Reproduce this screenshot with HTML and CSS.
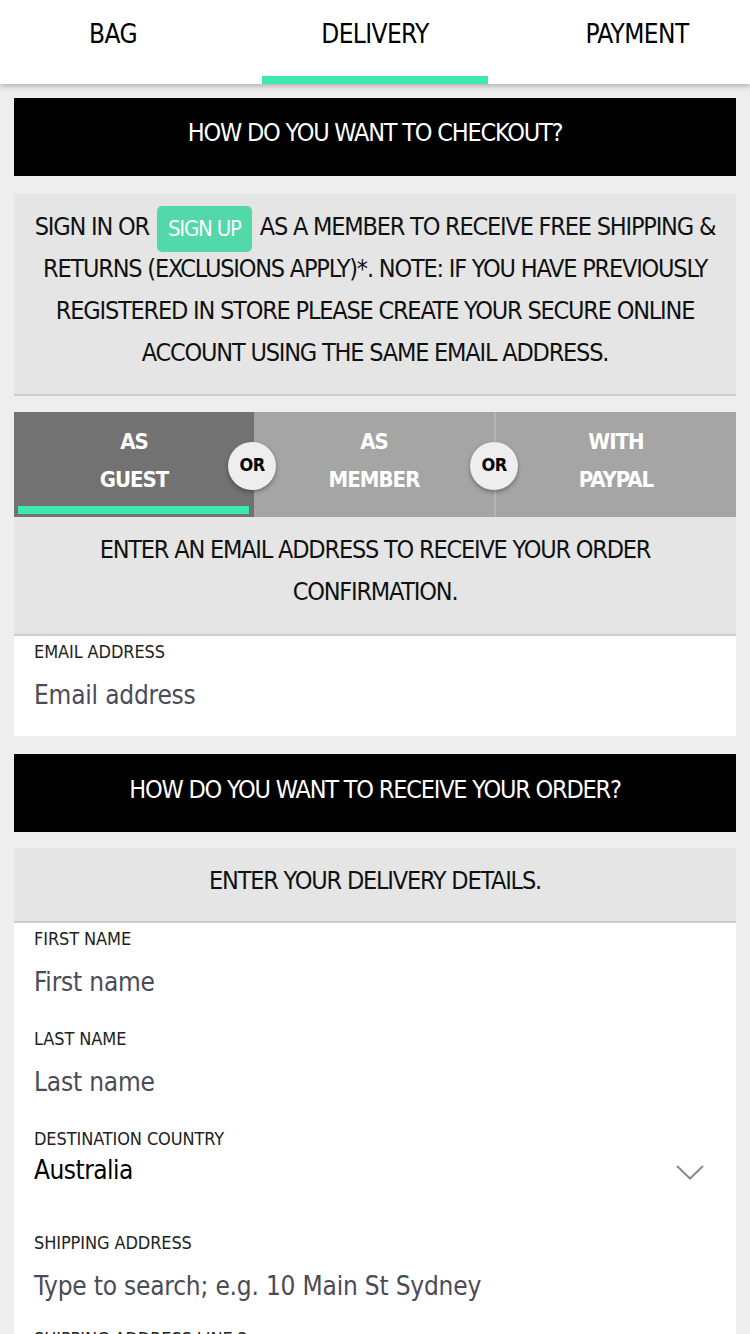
FILE: index.html
```html
<!DOCTYPE html>
<html lang="en">
<head>
<meta charset="utf-8">
<title>Checkout - Delivery</title>
<link rel="stylesheet" href="styles.css">
</head>
<body>
<header class="steps">
  <div class="step step-first"><span class="step-label">BAG</span></div>
  <div class="step step-active"><span class="step-label">DELIVERY</span><span class="step-bar"></span></div>
  <div class="step step-last"><span class="step-label">PAYMENT</span></div>
</header>
<main class="page">
  <h2 class="banner">HOW DO YOU WANT TO CHECKOUT?</h2>
  <div class="note note-first">
    SIGN IN OR <span class="signup">SIGN UP</span> AS A MEMBER TO RECEIVE FREE SHIPPING &amp;<br>RETURNS (EXCLUSIONS APPLY)*. NOTE: IF YOU HAVE PREVIOUSLY<br>REGISTERED IN STORE PLEASE CREATE YOUR SECURE ONLINE<br>ACCOUNT USING THE SAME EMAIL ADDRESS.
  </div>
  <div class="methods">
    <div class="method method-active"><span class="method-text">AS<br>GUEST</span><span class="method-bar"></span></div>
    <div class="method"><span class="method-text">AS<br>MEMBER</span></div>
    <div class="method method-last"><span class="method-text">WITH<br>PAYPAL</span></div>
    <span class="or or-1">OR</span>
    <span class="or or-2">OR</span>
  </div>
  <div class="note">ENTER AN EMAIL ADDRESS TO RECEIVE YOUR ORDER<br>CONFIRMATION.</div>
  <div class="card">
    <div class="field">
      <div class="field-label">EMAIL ADDRESS</div>
      <div class="field-input">Email address</div>
    </div>
  </div>
  <h2 class="banner banner-second">HOW DO YOU WANT TO RECEIVE YOUR ORDER?</h2>
  <div class="note note-short">ENTER YOUR DELIVERY DETAILS.</div>
  <div class="card card-open">
    <div class="field">
      <div class="field-label">FIRST NAME</div>
      <div class="field-input">First name</div>
    </div>
    <div class="field">
      <div class="field-label">LAST NAME</div>
      <div class="field-input">Last name</div>
    </div>
    <div class="field field-select">
      <div class="field-label">DESTINATION COUNTRY</div>
      <div class="select-row">
        <div class="field-value">Australia</div>
        <svg class="chevron" width="28" height="15" viewBox="0 0 28 15"><path d="M1 1 L14 13.5 L27 1" fill="none" stroke="#8a8a8a" stroke-width="2"/></svg>
      </div>
    </div>
    <div class="field">
      <div class="field-label">SHIPPING ADDRESS</div>
      <div class="field-input">Type to search; e.g. 10 Main St Sydney</div>
    </div>
    <div class="field field-partial">
      <div class="field-label">SHIPPING ADDRESS LINE 2</div>
      <div class="field-input">Apartment, suite, unit</div>
    </div>
  </div>
</main>
</body>
</html>
```
FILE: styles.css
```css
* { box-sizing: border-box; }
html, body { margin: 0; padding: 0; }
body {
  background: #eeeeee;
  font-family: "DejaVu Sans Condensed", "Liberation Sans", sans-serif;
  color: #111;
  overflow: hidden;
}
.steps {
  display: flex;
  height: 84px;
  background: #fff;
  box-shadow: 0 2px 6px rgba(0,0,0,0.28);
  position: relative;
  z-index: 2;
}
.step {
  flex: 1;
  display: flex;
  flex-direction: column;
  align-items: center;
  padding-top: 14px;
}
.step-first { padding-right: 18px; }
.step-last { padding-left: 18px; }
.step-active {
  flex: 0 0 226px;
  margin: 0 18px;
}
.step-label {
  font-size: 26px;
  letter-spacing: -0.6px;
  line-height: 40px;
  color: #000;
}
.step-bar {
  align-self: stretch;
  margin-top: auto;
  height: 8px;
  background: #3de9b1;
}
.page {
  padding: 14px 14px 0;
}
.banner {
  margin: 0;
  height: 78px;
  padding-bottom: 9px;
  background: #000;
  color: #fff;
  font-weight: normal;
  font-size: 25px;
  letter-spacing: -1.2px;
  display: flex;
  align-items: center;
  justify-content: center;
}
.banner-second { margin-top: 18px; padding-bottom: 8px; }
.note {
  background: #e5e5e5;
  border-bottom: 2px solid #cccccc;
  text-align: center;
  font-size: 25px;
  letter-spacing: -1.2px;
  line-height: 42px;
  padding: 12px 10px 21px;
  color: #111;
}
.note-first {
  margin-top: 18px;
  padding: 12px 6px 20px;
}
.note-short {
  margin-top: 16px;
  padding: 12px 10px 19px;
}
.signup {
  display: inline-block;
  background: #52d8a9;
  color: #fff;
  border-radius: 5px;
  padding: 0 11px;
  font-size: 22px;
  letter-spacing: -1.2px;
  line-height: 46px;
  vertical-align: top;
  margin: 0 2px -4px;
}
.methods {
  margin-top: 16px;
  display: flex;
  height: 105px;
  position: relative;
}
.method {
  flex: 1;
  background: #a5a5a5;
  display: flex;
  flex-direction: column;
  align-items: center;
  padding-top: 11px;
  border-left: 2px solid #b5b5b5;
}
.method-active {
  background: #727272;
  border-left: 0;
}
.method-active + .method { border-left: 0; }
.method-text {
  color: #fff;
  font-weight: bold;
  font-size: 22px;
  letter-spacing: -1px;
  line-height: 38px;
  text-align: center;
}
.method-bar {
  align-self: stretch;
  margin: auto 5px 3px 4px;
  height: 8px;
  background: #3de9b1;
}
.or {
  position: absolute;
  top: 30px;
  width: 48px;
  height: 48px;
  padding-bottom: 3px;
  border-radius: 50%;
  background: #eeeeee;
  box-shadow: 0 2px 4px rgba(0,0,0,0.35);
  display: flex;
  align-items: center;
  justify-content: center;
  font-weight: bold;
  font-size: 18px;
  letter-spacing: -0.5px;
  color: #000;
}
.or-1 { left: 214px; }
.or-2 { left: 456px; }
.card {
  background: #fff;
}
.field {
  padding: 4px 20px 21px;
}
.field-label {
  font-size: 18px;
  letter-spacing: -0.1px;
  line-height: 24px;
  color: #222;
}
.field-input {
  margin-top: 11px;
  font-size: 26px;
  letter-spacing: -0.2px;
  line-height: 40px;
  color: #4b4b55;
}
.field-select { padding-bottom: 37px; }
.select-row {
  display: flex;
  align-items: center;
  justify-content: space-between;
  margin-top: -1px;
  padding-right: 12px;
}
.field-value {
  font-size: 26px;
  letter-spacing: -0.5px;
  line-height: 40px;
  color: #000;
}
.chevron { margin-top: 4px; }
.field-partial { padding-top: 0; }
```
